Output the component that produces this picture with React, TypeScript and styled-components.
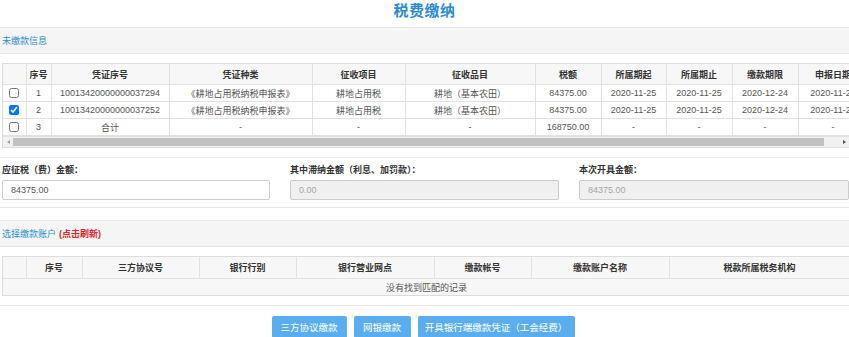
import React from 'react';
import styled, { createGlobalStyle } from 'styled-components';

const GlobalStyle = createGlobalStyle`
    html, body {
        margin: 0;
        padding: 0;
        background: #fff;
        overflow: hidden;
    }
    body {
        font-family: "Liberation Sans", "Noto Sans CJK SC", sans-serif;
        font-size: 9px;
        color: #555;
    }
`;

const Page = styled.div`
    width: 849px;
    height: 337px;
    overflow: hidden;
`;

const Title = styled.div`
    height: 27px;
    line-height: 21px;
    text-align: center;
    font-size: 15px;
    font-weight: bold;
    color: #2b8ad6;
    letter-spacing: 0.5px;
`;

const SectionBar = styled.div<{ $top?: number }>`
    height: 25px;
    margin-top: ${p => p.$top ?? 0}px;
    display: flex;
    align-items: center;
    gap: 3px;
    padding-left: 2px;
    background: #f5f5f5;
    border-top: 1px solid #e6e6e6;
    border-bottom: 1px solid #e6e6e6;
    color: #2a8ed2;
`;

const Refresh = styled.span`
    color: #e4262b;
    font-weight: bold;
`;

const Content = styled.div`
    padding-left: 2px;
`;

const ScrollBox = styled.div`
    margin-top: 9px;
    border: 1px solid #ddd;
    border-right: none;
    overflow: hidden;
`;

const Table = styled.table<{ $width: number }>`
    border-collapse: collapse;
    table-layout: fixed;
    width: ${p => p.$width}px;
`;

const Th = styled.th<{ $h?: number }>`
    height: ${p => p.$h ?? 20}px;
    padding: 0;
    border: 1px solid #e2e2e2;
    border-top: none;
    background: #f7f7f7;
    color: #333;
    font-weight: bold;
    text-align: center;
    white-space: nowrap;
    overflow: hidden;
    &:first-child { border-left: none; }
`;

const Td = styled.td`
    height: 16px;
    padding: 0;
    border: 1px solid #e2e2e2;
    text-align: center;
    white-space: nowrap;
    overflow: hidden;
    color: #555;
    &:first-child { border-left: none; }
`;

const Tr = styled.tr<{ $bg?: string }>`
    background: ${p => p.$bg ?? '#fff'};
`;

const Check = styled.input`
    width: 10px;
    height: 10px;
    margin: 0;
    vertical-align: middle;
`;

const ScrollBar = styled.div`
    height: 10px;
    display: flex;
    align-items: center;
    background: #f1f1f1;
    border-top: 1px solid #e2e2e2;
`;

const Arrow = styled.div<{ $dir: 'left' | 'right' }>`
    width: 10px;
    display: flex;
    justify-content: center;
    &::before {
        content: '';
        border-top: 2px solid transparent;
        border-bottom: 2px solid transparent;
        ${p => p.$dir === 'left' ? 'border-right: 3px solid #a3a3a3;' : 'border-left: 3px solid #505050;'}
    }
`;

const Thumb = styled.div`
    height: 8px;
    width: 811px;
    background: #c1c1c1;
`;

const ScrollSpacer = styled.div`
    flex: 1;
`;

const FormPanel = styled.div`
    margin-top: 9px;
    border-top: 1px solid #f0f0f0;
    border-bottom: 1px solid #e8e8e8;
    padding: 6px 0 7px 2px;
    display: grid;
    grid-template-columns: 268px 269px 270px;
    column-gap: 20px;
`;

const Field = styled.div`
    display: flex;
    flex-direction: column;
    gap: 3px;
`;

const Label = styled.label`
    height: 13px;
    line-height: 13px;
    font-weight: bold;
    color: #333;
`;

const Input = styled.input`
    box-sizing: border-box;
    height: 20px;
    width: 100%;
    padding: 0 8px;
    border: 1px solid #ccc;
    border-radius: 2px;
    font-family: inherit;
    font-size: 9px;
    color: #555;
    background: #fff;
    outline: none;
    &:disabled {
        background: #f0f0f0;
        color: #a5a5a5;
    }
`;

const Empty = styled.td`
    height: 16px;
    padding: 0;
    text-align: center;
    color: #555;
    border-top: 1px solid #e2e2e2;
`;

const Footer = styled.div`
    margin-top: 9px;
    border-top: 1px solid #e8e8e8;
    padding-top: 10px;
    display: flex;
    justify-content: center;
    gap: 7px;
    padding-right: 3px;
`;

const Button = styled.button<{ $w: number }>`
    height: 22px;
    width: ${p => p.$w}px;
    padding: 0;
    border: none;
    border-radius: 2px;
    background: #5aaeef;
    color: #fff;
    font-family: inherit;
    font-size: 9.5px;
    cursor: pointer;
`;

const taxCols = [23, 25, 118, 143, 93, 130, 66, 65, 66, 66, 70];
const taxHeads = ['', '序号', '凭证序号', '凭证种类', '征收项目', '征收品目', '税额', '所属期起', '所属期止', '缴款期限', '申报日期'];

const taxRows = [
    { no: '1', id: '10013420000000037294', kind: '《耕地占用税纳税申报表》', item: '耕地占用税', sub: '耕地（基本农田）', amount: '84375.00', from: '2020-11-25', to: '2020-11-25', due: '2020-12-24', filed: '2020-11-25', checked: false },
    { no: '2', id: '10013420000000037252', kind: '《耕地占用税纳税申报表》', item: '耕地占用税', sub: '耕地（基本农田）', amount: '84375.00', from: '2020-11-25', to: '2020-11-25', due: '2020-12-24', filed: '2020-11-25', checked: true },
    { no: '3', id: '合计', kind: '-', item: '-', sub: '-', amount: '168750.00', from: '-', to: '-', due: '-', filed: '-', checked: false },
];

const accountCols = [23, 56, 117, 97, 138, 97, 138, 181];
const accountHeads = ['', '序号', '三方协议号', '银行行别', '银行营业网点', '缴款帐号', '缴款账户名称', '税款所属税务机构'];

export default function App() {
    return (
        <Page>
            <GlobalStyle />
            <Title>税费缴纳</Title>
            <SectionBar>未缴款信息</SectionBar>
            <Content>
                <ScrollBox>
                    <Table $width={taxCols.reduce((a, b) => a + b, 0)}>
                        <colgroup>
                            {taxCols.map((w, i) => <col key={i} style={{ width: w }} />)}
                        </colgroup>
                        <thead>
                            <tr>
                                {taxHeads.map((h, i) => <Th key={i}>{h}</Th>)}
                            </tr>
                        </thead>
                        <tbody>
                            {taxRows.map(r => (
                                <Tr key={r.no}>
                                    <Td><Check type="checkbox" defaultChecked={r.checked} /></Td>
                                    <Td>{r.no}</Td>
                                    <Td>{r.id}</Td>
                                    <Td>{r.kind}</Td>
                                    <Td>{r.item}</Td>
                                    <Td>{r.sub}</Td>
                                    <Td>{r.amount}</Td>
                                    <Td>{r.from}</Td>
                                    <Td>{r.to}</Td>
                                    <Td>{r.due}</Td>
                                    <Td>{r.filed}</Td>
                                </Tr>
                            ))}
                        </tbody>
                    </Table>
                    <ScrollBar>
                        <Arrow $dir="left" />
                        <Thumb />
                        <ScrollSpacer />
                        <Arrow $dir="right" />
                    </ScrollBar>
                </ScrollBox>
            </Content>

            <FormPanel>
                <Field>
                    <Label>应征税（费）金额：</Label>
                    <Input defaultValue="84375.00" />
                </Field>
                <Field>
                    <Label>其中滞纳金额（利息、加罚款）：</Label>
                    <Input defaultValue="0.00" disabled />
                </Field>
                <Field>
                    <Label>本次开具金额：</Label>
                    <Input defaultValue="84375.00" disabled />
                </Field>
            </FormPanel>

            <SectionBar $top={12}>
                选择缴款账户 <Refresh>(点击刷新)</Refresh>
            </SectionBar>
            <Content>
                <ScrollBox>
                    <Table $width={accountCols.reduce((a, b) => a + b, 0)}>
                        <colgroup>
                            {accountCols.map((w, i) => <col key={i} style={{ width: w }} />)}
                        </colgroup>
                        <thead>
                            <tr>
                                {accountHeads.map((h, i) => <Th key={i} $h={21}>{h}</Th>)}
                            </tr>
                        </thead>
                        <tbody>
                            <Tr $bg="#f7f7f7">
                                <Empty colSpan={accountCols.length}>没有找到匹配的记录</Empty>
                            </Tr>
                        </tbody>
                    </Table>
                </ScrollBox>
            </Content>

            <Footer>
                <Button $w={75}>三方协议缴款</Button>
                <Button $w={57}>网银缴款</Button>
                <Button $w={157}>开具银行端缴款凭证（工会经费）</Button>
            </Footer>
        </Page>
    );
}
